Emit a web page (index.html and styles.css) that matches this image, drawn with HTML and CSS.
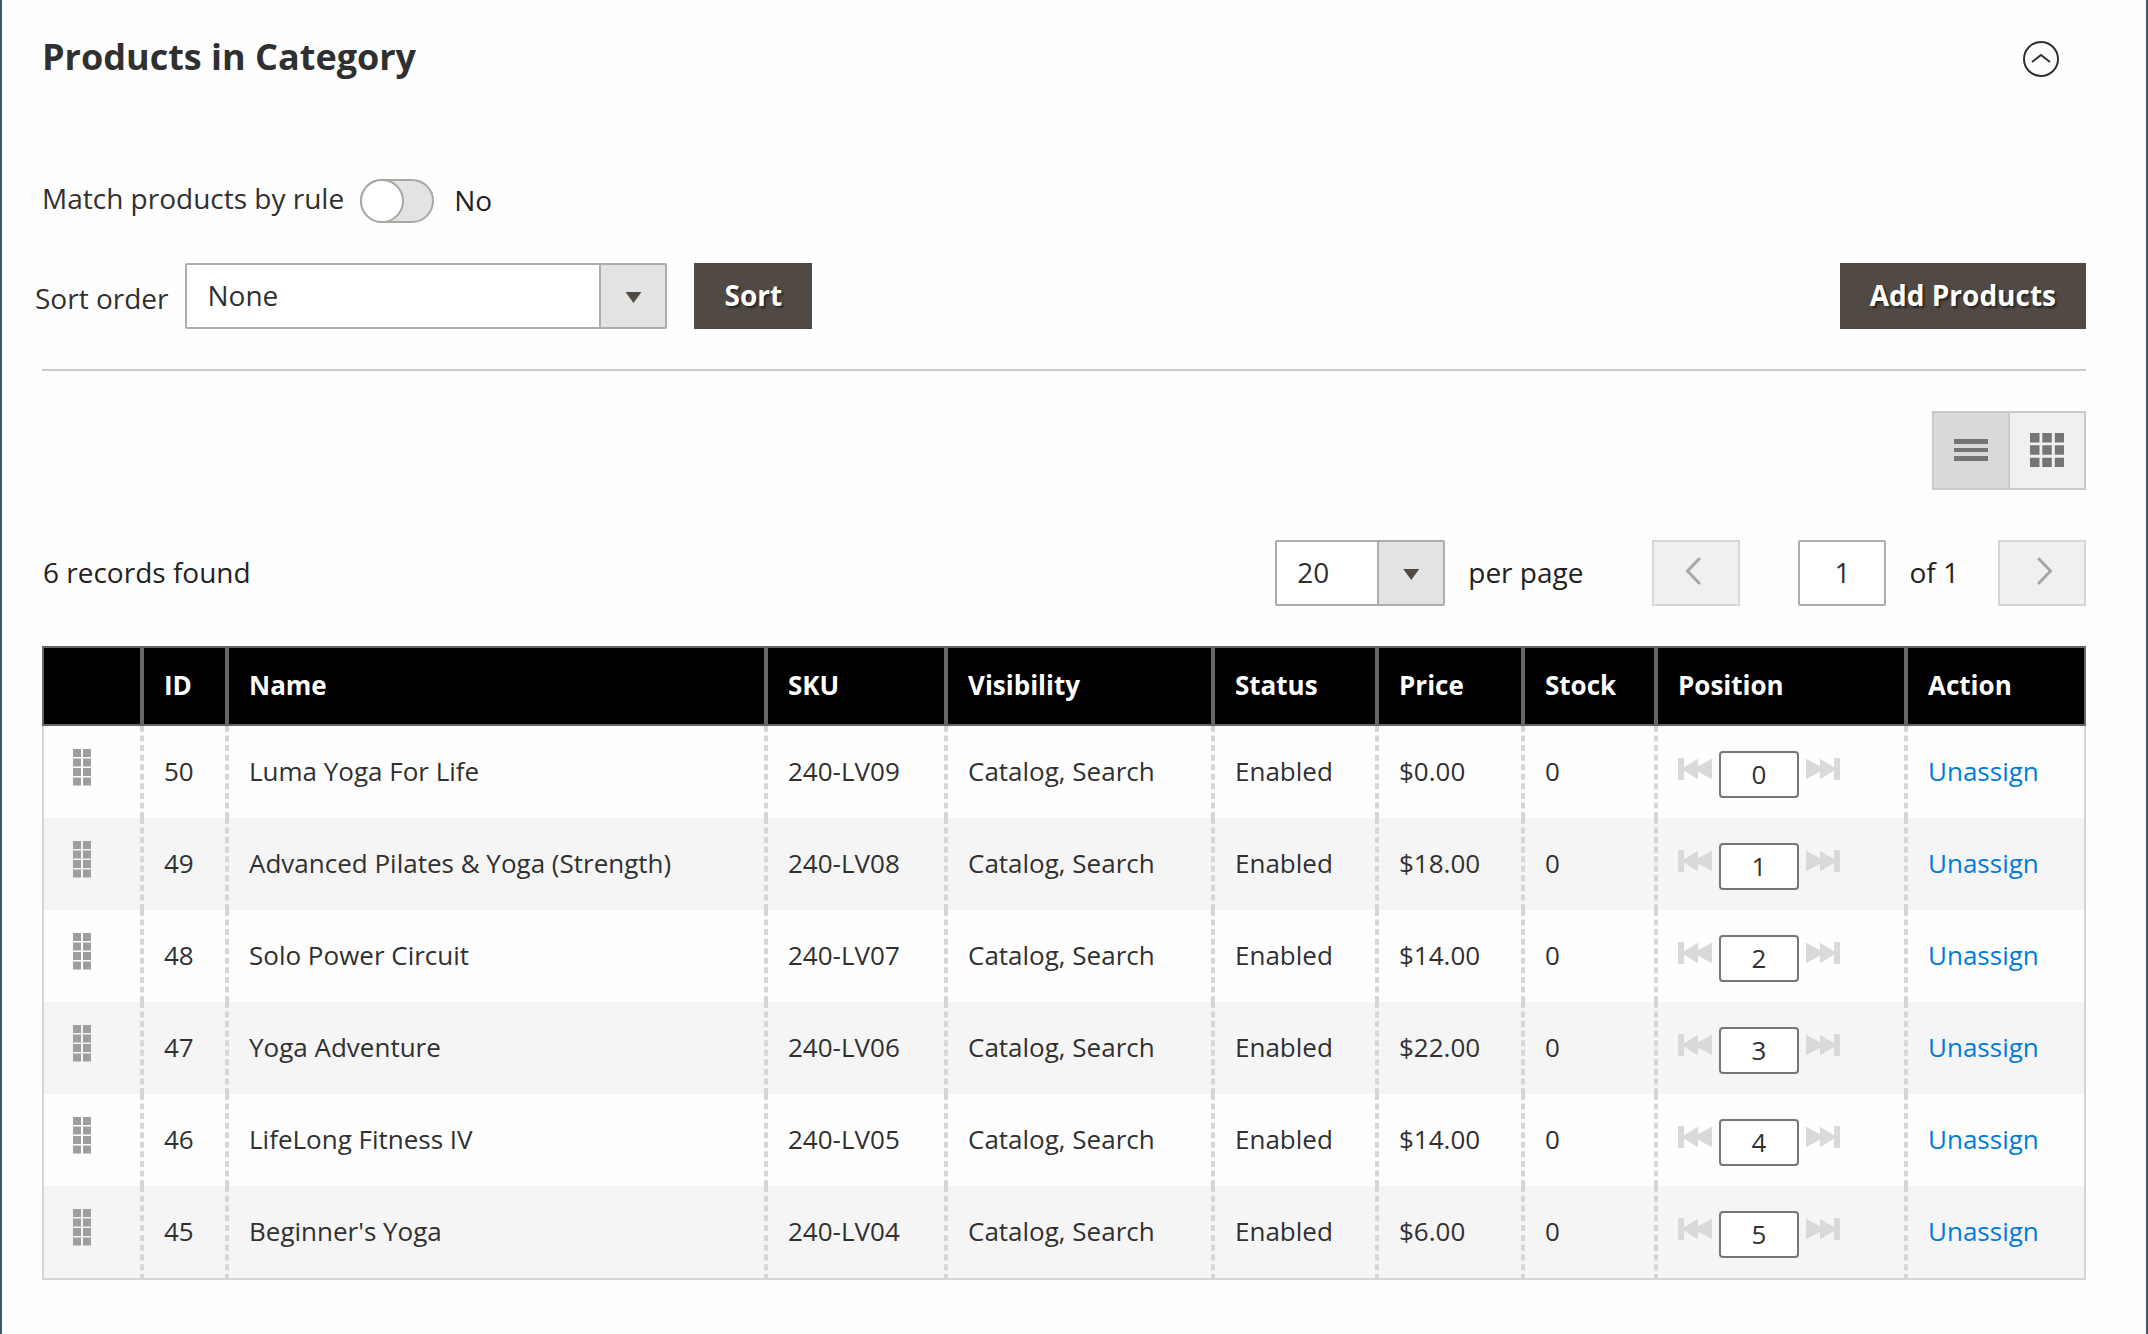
FILE: index.html
```html
<!DOCTYPE html>
<html lang="en">
<head>
<meta charset="utf-8">
<title>Products in Category</title>
<link rel="stylesheet" href="styles.css">
</head>
<body>
<svg class="sprite" aria-hidden="true">
  <symbol id="drag" viewBox="0 0 20 38"><path d="M1 1h8v8H1zM11 1h8v8h-8zM1 10.500h8v8H1zM11 10.500h8v8h-8zM1 20h8v8H1zM11 20h8v8h-8zM1 29.500h8v8H1zM11 29.500h8v8h-8z"/></symbol>
  <symbol id="first" viewBox="0 0 34 22"><path d="M0 0h6v9.200L20 .8v7.500L34 .8v20.400L20 13.700v7.500L6 12.800V22H0z"/></symbol>
  <symbol id="last" viewBox="0 0 34 22"><path d="M34 0h-6v9.200L14 .8v7.500L0 .8v20.400l14-7.500v7.500l14-8.400V22h6z"/></symbol>
</svg>
<main class="panel">
  <header class="panel-header">
    <h1 class="title">Products in Category</h1>
    <button class="collapse" type="button" aria-label="Collapse section">
      <svg width="36" height="36" viewBox="0 0 36 36" fill="none" stroke="#303030" stroke-width="2"><circle cx="18" cy="18" r="17"/><path d="M9 21l9-7 9 7"/></svg>
    </button>
  </header>

  <div class="rule">
    <label class="rule-label" for="match">Match products by rule</label>
    <input class="toggle" id="match" type="checkbox">
    <span class="rule-value">No</span>
  </div>

  <div class="toolbar">
    <label class="sort-label" for="sort">Sort order</label>
    <span class="select select-sort"><select id="sort"><option>None</option></select></span>
    <button class="button" type="button">Sort</button>
    <button class="button button-add" type="button">Add Products</button>
  </div>

  <div class="views">
    <button class="view view-active" type="button" aria-label="List view"><svg width="34" height="34" fill="#757575"><path d="M0 6h34v5H0zM0 15h34v4H0zM0 23h34v5H0z"/></svg></button>
    <button class="view" type="button" aria-label="Grid view"><svg width="34" height="34" fill="#757575"><path d="M0 0h9.500v9.500H0zM12.300 0h9.500v9.500h-9.500zM24.800 0H34v9.500h-9.200zM0 12.300h9.500v9.500H0zM12.300 12.300h9.500v9.500h-9.500zM24.800 12.300H34v9.500h-9.200zM0 24.800h9.500V34H0zM12.300 24.800h9.500V34h-9.500zM24.800 24.800H34V34h-9.200z"/></svg></button>
  </div>

  <div class="pager">
    <span class="records">6 records found</span>
    <span class="select select-size"><select id="size"><option>20</option></select></span>
    <label class="per-page" for="size">per page</label>
    <button class="page-button" type="button" aria-label="Previous page" disabled><svg width="20" height="28" viewBox="0 0 20 28"><path d="M13 2L1.500 14 13 26"/></svg></button>
    <input class="page-input" id="page" type="text" value="1">
    <label class="page-total" for="page">of 1</label>
    <button class="page-button" type="button" aria-label="Next page" disabled><svg width="20" height="28" viewBox="0 0 20 28"><path d="M7 2l11.500 12L7 26"/></svg></button>
  </div>

  <table class="grid">
    <colgroup><col class="c-drag"><col class="c-id"><col><col class="c-sku"><col class="c-visibility"><col class="c-status"><col class="c-price"><col class="c-stock"><col class="c-position"><col class="c-action"></colgroup>
    <thead>
      <tr><th></th><th>ID</th><th>Name</th><th>SKU</th><th>Visibility</th><th>Status</th><th>Price</th><th>Stock</th><th>Position</th><th>Action</th></tr>
    </thead>
    <tbody>
      <tr><td><svg class="drag"><use href="#drag"/></svg></td><td>50</td><td>Luma Yoga For Life</td><td>240-LV09</td><td>Catalog, Search</td><td>Enabled</td><td>$0.00</td><td>0</td><td><div class="position"><button class="move" type="button" aria-label="Move to top"><svg><use href="#first"/></svg></button><input class="position-input" type="text" value="0" aria-label="Position"><button class="move" type="button" aria-label="Move to bottom"><svg><use href="#last"/></svg></button></div></td><td><a href="#">Unassign</a></td></tr>
      <tr><td><svg class="drag"><use href="#drag"/></svg></td><td>49</td><td>Advanced Pilates &amp; Yoga (Strength)</td><td>240-LV08</td><td>Catalog, Search</td><td>Enabled</td><td>$18.00</td><td>0</td><td><div class="position"><button class="move" type="button" aria-label="Move to top"><svg><use href="#first"/></svg></button><input class="position-input" type="text" value="1" aria-label="Position"><button class="move" type="button" aria-label="Move to bottom"><svg><use href="#last"/></svg></button></div></td><td><a href="#">Unassign</a></td></tr>
      <tr><td><svg class="drag"><use href="#drag"/></svg></td><td>48</td><td>Solo Power Circuit</td><td>240-LV07</td><td>Catalog, Search</td><td>Enabled</td><td>$14.00</td><td>0</td><td><div class="position"><button class="move" type="button" aria-label="Move to top"><svg><use href="#first"/></svg></button><input class="position-input" type="text" value="2" aria-label="Position"><button class="move" type="button" aria-label="Move to bottom"><svg><use href="#last"/></svg></button></div></td><td><a href="#">Unassign</a></td></tr>
      <tr><td><svg class="drag"><use href="#drag"/></svg></td><td>47</td><td>Yoga Adventure</td><td>240-LV06</td><td>Catalog, Search</td><td>Enabled</td><td>$22.00</td><td>0</td><td><div class="position"><button class="move" type="button" aria-label="Move to top"><svg><use href="#first"/></svg></button><input class="position-input" type="text" value="3" aria-label="Position"><button class="move" type="button" aria-label="Move to bottom"><svg><use href="#last"/></svg></button></div></td><td><a href="#">Unassign</a></td></tr>
      <tr><td><svg class="drag"><use href="#drag"/></svg></td><td>46</td><td>LifeLong Fitness IV</td><td>240-LV05</td><td>Catalog, Search</td><td>Enabled</td><td>$14.00</td><td>0</td><td><div class="position"><button class="move" type="button" aria-label="Move to top"><svg><use href="#first"/></svg></button><input class="position-input" type="text" value="4" aria-label="Position"><button class="move" type="button" aria-label="Move to bottom"><svg><use href="#last"/></svg></button></div></td><td><a href="#">Unassign</a></td></tr>
      <tr><td><svg class="drag"><use href="#drag"/></svg></td><td>45</td><td>Beginner's Yoga</td><td>240-LV04</td><td>Catalog, Search</td><td>Enabled</td><td>$6.00</td><td>0</td><td><div class="position"><button class="move" type="button" aria-label="Move to top"><svg><use href="#first"/></svg></button><input class="position-input" type="text" value="5" aria-label="Position"><button class="move" type="button" aria-label="Move to bottom"><svg><use href="#last"/></svg></button></div></td><td><a href="#">Unassign</a></td></tr>
    </tbody>
  </table>
</main>
</body>
</html>
```
FILE: styles.css
```css
*, *::before, *::after { box-sizing: border-box; }

body {
  margin: 0;
  background: #fefefe;
  color: #303030;
  font-family: "Open Sans", "Noto Sans", sans-serif;
  font-size: 28px;
  line-height: 36px;
}

button, input, select {
  margin: 0;
  padding: 0;
  border: 0;
  color: inherit;
  font: inherit;
}

svg { display: block; }

.sprite { position: absolute; width: 0; height: 0; }

.panel {
  min-height: 100vh;
  padding: 35px 60px 52px 40px;
  border: solid #41596a;
  border-width: 0 2px;
}

.panel-header {
  display: flex;
  align-items: center;
  justify-content: space-between;
  margin-bottom: 96px;
}

.title {
  margin: 0;
  padding-bottom: 4px;
  font-size: 36px;
  line-height: 44px;
  font-weight: 700;
}

.collapse { margin-right: 27px; background: none; }

.rule { display: flex; align-items: center; margin-bottom: 40px; }
.rule-label { padding-bottom: 6px; margin-right: 16px; }
.rule-value { padding-bottom: 2px; margin-left: 20px; color: #222; }

.toggle {
  appearance: none;
  width: 74px;
  height: 44px;
  border: 2px solid #aaa6a0;
  border-radius: 22px;
  background: #e3e3e3;
}

.toggle::before {
  content: "";
  display: block;
  width: 44px;
  height: 44px;
  margin: -2px;
  border: 2px solid #aaa6a0;
  border-radius: 50%;
  background: #fff;
}

.toolbar {
  display: flex;
  align-items: center;
  padding-bottom: 40px;
  border-bottom: 2px solid #cacaca;
}

.sort-label { margin: 0 17px 0 -7px; padding-top: 4px; }

.select { position: relative; display: block; height: 66px; }

.select select {
  appearance: none;
  width: 100%;
  height: 100%;
  padding: 0 88px 2px 20px;
  border: 2px solid #adadad;
  border-radius: 2px;
  background: #fff;
}

.select::before {
  content: "";
  position: absolute;
  inset: 2px 2px 2px auto;
  width: 66px;
  border-left: 2px solid #adadad;
  background: #e3e3e3;
  pointer-events: none;
}

.select::after {
  content: "";
  position: absolute;
  right: 26px;
  top: 29px;
  width: 16px;
  height: 11px;
  background: #514943;
  clip-path: polygon(0 0, 100% 0, 50% 100%);
  pointer-events: none;
}

.select-sort { width: 482px; margin-right: 27px; }
.select-size { width: 170px; margin-right: 23px; }

.button {
  height: 66px;
  padding: 0 30px 2px;
  background: #514943;
  color: #fff;
  font-weight: 700;
  text-shadow: 2px 2px 2px rgba(0, 0, 0, .5);
}

.button-add { margin-left: auto; }

.views { display: flex; justify-content: flex-end; margin-top: 40px; }

.view {
  display: flex;
  align-items: center;
  justify-content: center;
  width: 78px;
  height: 79px;
  padding-bottom: 1px;
  border: 2px solid #cacaca;
  background: #f0f0f0;
}

.view + .view { margin-left: -2px; }
.view-active { background: #d9d9d9; }

.pager { display: flex; align-items: center; margin: 50px 0 40px; color: #222; }
.pager select { color: #303030; }
.records, .per-page, .page-total { padding-bottom: 2px; }
.records { margin-right: auto; padding-left: 1px; }
.per-page { margin-right: 69px; }
.page-total { margin: 0 39px 0 23px; }

.page-button {
  display: flex;
  align-items: center;
  justify-content: center;
  width: 88px;
  height: 66px;
  padding-bottom: 5px;
  border: 2px solid #d6d6d6;
  background: #f0f0f0;
}

.page-button path {
  fill: none;
  stroke: #a8a6a3;
  stroke-width: 3;
  stroke-linecap: round;
  stroke-linejoin: round;
}

.page-input {
  width: 88px;
  height: 66px;
  margin-left: 58px;
  padding-bottom: 2px;
  border: 2px solid #adadad;
  border-radius: 2px;
  background: #fff;
  color: #303030;
  text-align: center;
}

.grid {
  width: 100%;
  table-layout: fixed;
  border-collapse: separate;
  border-spacing: 0;
  font-size: 26px;
}

.c-drag { width: 100px; }
.c-id { width: 85px; }
.c-sku { width: 180px; }
.c-visibility { width: 267px; }
.c-status { width: 164px; }
.c-price { width: 146px; }
.c-stock { width: 133px; }
.c-position { width: 250px; }
.c-action { width: 180px; }

.grid th {
  height: 80px;
  padding: 0 18px 2px 20px;
  border: 2px solid #666;
  background: #000;
  color: #fff;
  font-weight: 700;
  text-align: left;
}

.grid td {
  height: 92px;
  padding: 0 18px 2px 20px;
  border: 2px dashed #d6d6d6;
  border-width: 0 2px;
}

.grid td:first-child { padding-left: 28px; border-left-style: solid; }
.grid td:last-child { border-right-style: solid; }
.grid tbody tr:nth-child(even) { background: #f5f5f5; }
.grid tbody tr:last-child td { height: 94px; border-bottom: 2px solid #d6d6d6; }

.grid a { color: #007bdb; text-decoration: none; }

.drag { width: 20px; height: 38px; margin-bottom: 8px; fill: #9e9e9e; }

.position { display: flex; align-items: flex-start; padding-top: 6px; }

.move { padding: 7px 0 0; background: none; }
.move svg { width: 34px; height: 22px; fill: #d9d9d9; }

.position-input {
  width: 80px;
  height: 47px;
  margin: 0 7px;
  border: 2px solid #767676;
  border-radius: 4px;
  background: #fff;
  text-align: center;
}
```
